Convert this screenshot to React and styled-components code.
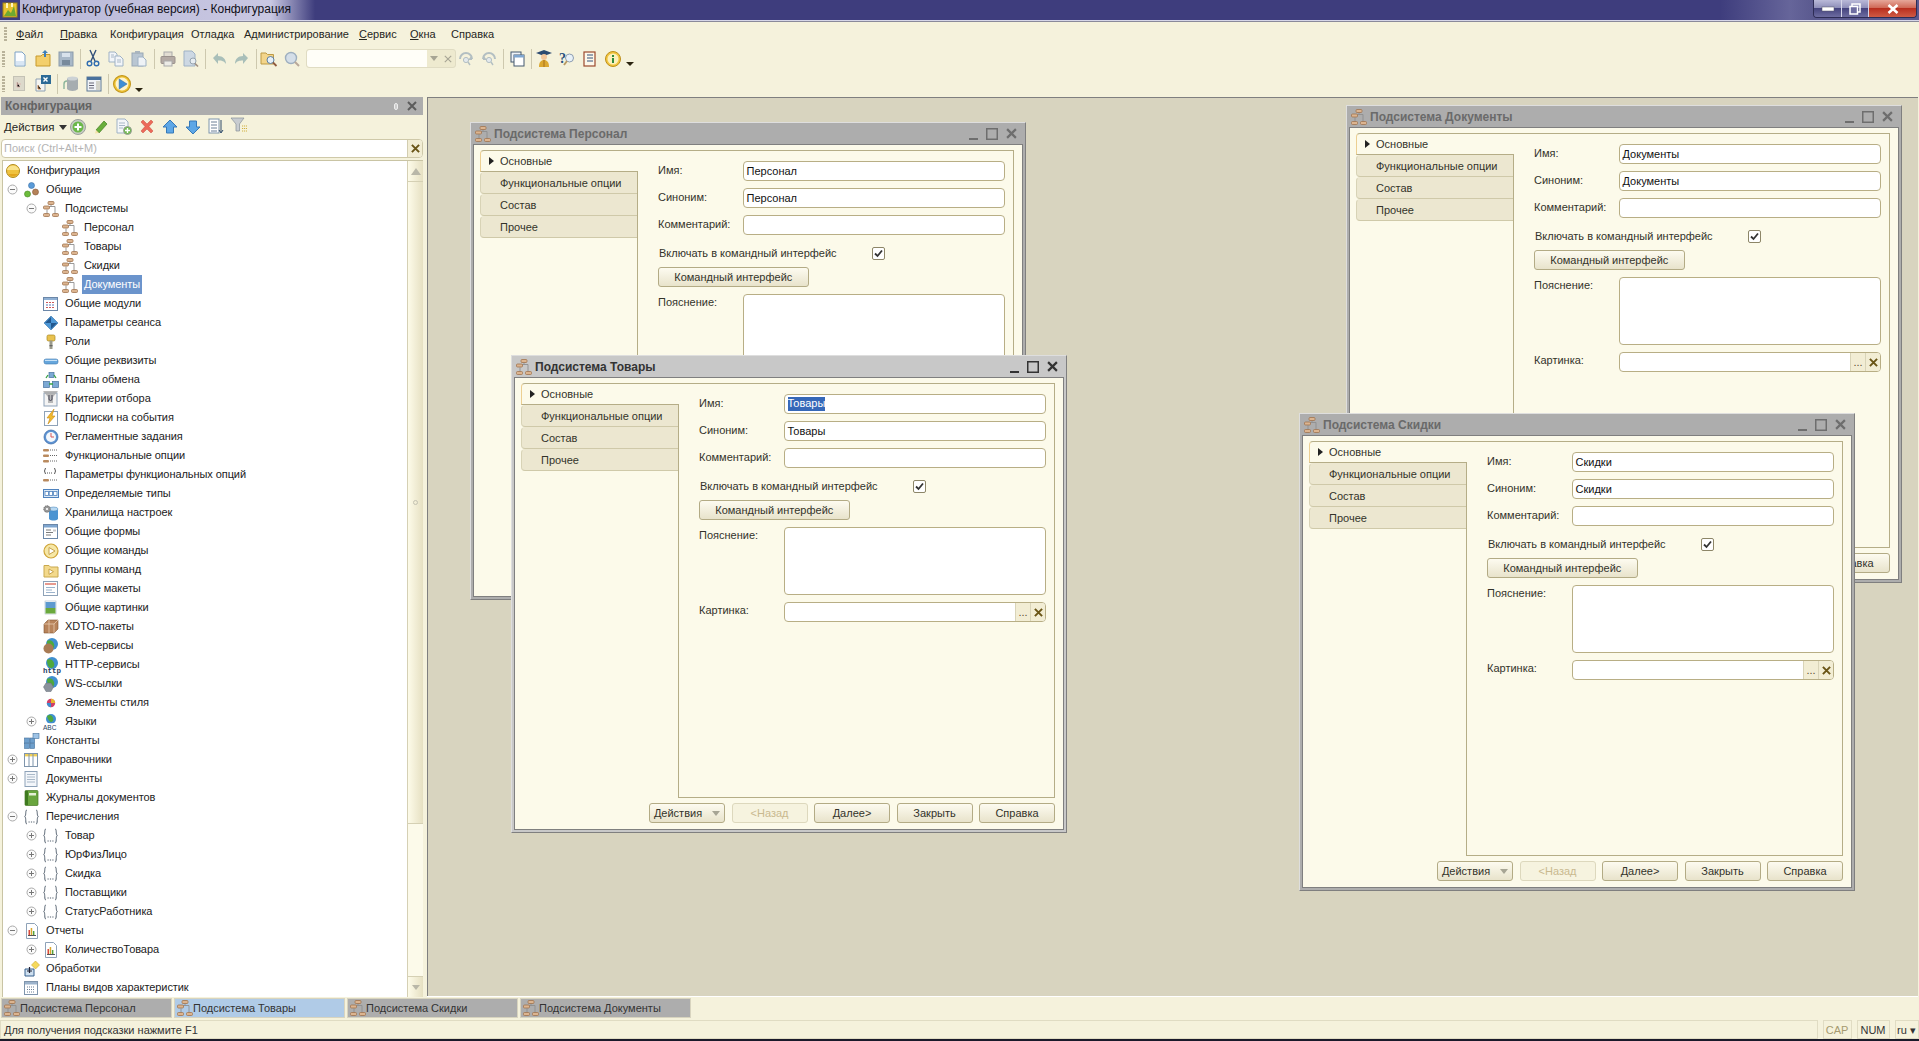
import React from "react";
import styled, { createGlobalStyle } from "styled-components";

const Global = createGlobalStyle`
  html, body { margin: 0; padding: 0; width: 1919px; height: 1041px; overflow: hidden; background: #f5f2dc; }
  body { font: 11px "Liberation Sans", Arial, sans-serif; color: #1c1c1c; }
  * { box-sizing: border-box; }
`;

const Svg = styled.svg`
  display: block;
  flex: none;
  overflow: visible;
`;

const G = ({ s = 16, children }) => (
  <Svg width={s} height={s} viewBox="0 0 16 16">{children}</Svg>
);

const Globe = () => (
  <>
    <circle cx="9" cy="6" r="6" fill="#3f8fd0" />
    <path d="M4 3c3-2 6 0 7 3s-1 5-3 5-4-3-4-8z" fill="#4fa83d" />
  </>
);

const ICONS = {
  app: (<><rect x="1" y="1" width="14" height="14" fill="#e8c230" stroke="#a08418" /><path d="M2 14l4-6 3 3 3-7 2 10z" fill="#6fa830" /><path d="M4 1v5h2V1zM9 1v4h2V1z" fill="#fff6c0" /></>),
  sub: (<><g stroke="#8f8f8f" fill="none" strokeWidth=".9"><path d="M8 3.500v2M4 8.500V12.500M4 5.500h8M12 5.500V12.500" /></g><g fill="#dcb48f" stroke="#a0744f" strokeWidth=".8"><rect x="5" y=".5" width="6" height="3" rx="1" /><rect x=".5" y="5" width="6" height="3" rx="1" /><rect x=".5" y="12.500" width="6" height="3" rx="1" /><rect x="9.500" y="12.500" width="6" height="3" rx="1" /></g></>),
  config: (<><circle cx="8" cy="8" r="6.500" fill="#efc23e" stroke="#b18b1e" /><path d="M2 7c1-6 11-6 12 0z" fill="#f9e38c" /><path d="M3 11c3 3 7 3 10 0z" fill="#e2a51d" /></>),
  common: (<><circle cx="7.500" cy="3.500" r="3" fill="#5a9bd8" stroke="#3d72a8" strokeWidth=".6" /><circle cx="3.500" cy="12" r="3" fill="#6cbc3c" stroke="#478a22" strokeWidth=".6" /><circle cx="11.500" cy="10" r="3" fill="#b58258" stroke="#84593a" strokeWidth=".6" /></>),
  module: (<><rect x=".5" y="1.500" width="14" height="13" fill="#fff" stroke="#6b87a8" /><rect x="1" y="2" width="13" height="2" fill="#8fb0d4" /><path d="M3 6.500h9M3 11.500h9" stroke="#cc5a5a" strokeDasharray="2 1" /><path d="M3 9h9" stroke="#5a78b8" strokeDasharray="2 1" /></>),
  session: (<><path d="M8 1l7 7-7 7-7-7z" fill="#4c97d6" stroke="#2f6ea8" strokeWidth=".6" /><path d="M8 8h6l-6 6zM2 8h6V2z" fill="#23588e" /></>),
  role: (<><rect x="4" y="1" width="8" height="6" rx="1.500" fill="#e9c24f" stroke="#a9871f" strokeWidth=".7" /><rect x="6.500" y="6.500" width="3" height="8.500" fill="#9b9b8c" /><rect x="6.500" y="11" width="3" height="1.300" fill="#666" /></>),
  attr: (<><rect x="1" y="6" width="14" height="5" rx="2" fill="#66a6dc" stroke="#3b76ad" strokeWidth=".6" /><rect x="2" y="6.800" width="12" height="1.200" fill="#c7e2f7" /></>),
  exchange: (<><g fill="#7ca9d4" stroke="#47719d" strokeWidth=".7"><rect x="6" y=".5" width="5" height="5" /><rect x=".5" y="9.500" width="6" height="6" /><rect x="9.500" y="9.500" width="6" height="6" /></g><path d="M3 6l2-3M13 6l-2-3M6 12h4" stroke="#37a244" strokeWidth="1.300" fill="none" /></>),
  filter: (<><rect x="1" y="2" width="13" height="13" fill="#f4f4f4" stroke="#8ea2b8" /><path d="M0 0h15l-5 6v6H5V6z" fill="#a8a8a8" opacity=".8" /><path d="M6 4v4a1.500 1.500 0 003 0V4" stroke="#445" fill="none" /></>),
  event: (<><rect x="1.500" y="1.500" width="13" height="14" fill="#fff" stroke="#8ea2b8" /><path d="M11-1L4 8h3l-2 6 7-8H9z" fill="#f0b92e" stroke="#c98a16" strokeWidth=".6" /></>),
  clock: (<><circle cx="8" cy="8" r="7" fill="#5d93d2" stroke="#3a69a6" strokeWidth=".7" /><circle cx="8" cy="8" r="5" fill="#f4f8fc" /><path d="M8 4v4h3" stroke="#d85757" strokeWidth="1" fill="none" /></>),
  options: (<><g fill="#b98a5e"><rect x="0" y="1" width="6" height="2.400" rx="1" /><rect x="0" y="6.500" width="6" height="2.400" rx="1" /><rect x="0" y="12" width="6" height="2.400" rx="1" /></g><path d="M7 2h8M7 7.500h8M7 13h8" stroke="#666" strokeDasharray="1 1" /></>),
  optparams: (<><path d="M2.500 1Q.5 4 2.500 7M11.500 1q2 3 0 6" stroke="#555" fill="none" /><path d="M4 6h6" stroke="#555" strokeDasharray="1 1" /><rect x="0" y="12" width="6" height="2.400" rx="1" fill="#b98a5e" /><path d="M7 13h8" stroke="#666" strokeDasharray="1 1" /></>),
  types: (<><rect x=".5" y="3.500" width="15" height="8" fill="#dbe9f7" stroke="#4f82bd" /><g fill="#fff" stroke="#4f82bd" strokeWidth=".8"><rect x="2" y="5.500" width="3.400" height="4" /><rect x="6.200" y="5.500" width="3.400" height="4" /><rect x="10.600" y="5.500" width="3.400" height="4" /></g></>),
  storage: (<><path d="M6 4h9v10c-2 2-7 2-9 0z" fill="#4c94d2" /><ellipse cx="10.500" cy="4" rx="4.500" ry="2" fill="#b7d8f2" stroke="#3d7cb4" strokeWidth=".5" /><circle cx="4" cy="4" r="3.200" fill="#9a9a9a" stroke="#6b6b6b" strokeDasharray="1.400 .7" /><circle cx="4" cy="4" r="1.100" fill="#fff" /></>),
  forms: (<><rect x=".5" y=".5" width="14" height="14" fill="#fff" stroke="#6b87a8" /><rect x="1" y="1" width="13" height="2.500" fill="#7fa6d0" /><path d="M3 6h5M3 8.500h7M3 11h5" stroke="#7b7b7b" /><rect x="10" y="5.500" width="3" height="2" fill="#c9c9c9" /></>),
  commands: (<><circle cx="8" cy="8" r="7" fill="#f6e7a6" stroke="#cfa437" strokeWidth="1.200" /><path d="M6 4.500l6 3.500-6 3.500z" fill="#fff" stroke="#c7a24b" /></>),
  cmdgroup: (<><path d="M1 3.500h5l1.500 1.500h7.500v10H1z" fill="#f3d98c" stroke="#c9a94e" /><path d="M6 7l4.500 2.700L6 12.400z" fill="#fff" stroke="#c7a24b" /></>),
  template: (<><rect x=".5" y=".5" width="14" height="14" fill="#fff" stroke="#8ea2b8" /><rect x="2" y="2" width="11" height="2" fill="#e89a8f" /><path d="M3 6.500h9M3 9h6M3 11.500h9" stroke="#9cb3cc" /></>),
  picture: (<><rect x="2" y="1" width="11" height="13" fill="#fff" stroke="#9ab" strokeWidth=".5" /><rect x="2.500" y="2" width="10" height="6" fill="#5d9ad0" /><rect x="2.500" y="8" width="10" height="5.500" fill="#6aa93d" /></>),
  xdto: (<><path d="M1 5l4-4h10v9l-4 4H1z" fill="#b8845b" stroke="#7f5534" strokeWidth=".6" /><path d="M1 5h10v9M11 5l4-4M6 1v13" stroke="#e8cbb0" fill="none" strokeWidth=".8" /></>),
  web: (<><Globe /><circle cx="5.500" cy="10.500" r="5" fill="#a87b55" /></>),
  http: (<><Globe /><text x="0" y="15.500" fontSize="7.500" fontWeight="700" fontFamily="Liberation Mono" fill="#25405e">http</text></>),
  ws: (<><Globe /><path d="M3 7h5l2.500 4-2.500 4.500H3L.5 11z" fill="#8a929c" stroke="#656c74" strokeWidth=".5" /></>),
  style: (<><circle cx="8" cy="8" r="4.200" fill="#cf3f6a" /><path d="M8 3.800a4.200 4.200 0 014.200 4.200H8z" fill="#e9b62d" /><path d="M8 12.200A4.200 4.200 0 013.800 8H8z" fill="#3c8fd0" /></>),
  lang: (<><circle cx="8" cy="5" r="5" fill="#3f8fd0" /><path d="M4 2c3-2 5-1 6 2s-1 4-2 4-3-2-4-6z" fill="#4fa83d" /><rect x="0" y="9" width="16" height="7" fill="#fff" opacity=".7" /><text x="0" y="15.500" fontSize="6.500" fontFamily="Liberation Sans" fill="#25405e">ABC</text></>),
  constant: (<><g fill="#6e9fcc" stroke="#45729d" strokeWidth=".6"><rect x=".5" y="5" width="5" height="5" /><rect x="6" y="5" width="4.600" height="5" /><rect x=".5" y="10.500" width="5" height="5" /><rect x="6" y="10.500" width="4.600" height="5" /></g><rect x="9" y=".5" width="6" height="5" fill="#9ec3e6" stroke="#45729d" strokeWidth=".6" /></>),
  catalog: (<><rect x=".5" y="1.500" width="13" height="13" fill="#fff" stroke="#7f95ac" /><rect x="1" y="2" width="12" height="2.400" fill="#f0cf58" /><path d="M5 2v12M9 2v12" stroke="#7f95ac" /></>),
  doc: (<><rect x="1" y=".5" width="12" height="15" fill="#f3f6fa" stroke="#8ea2b8" /><path d="M3 3.500h8M3 6h8M3 8.500h8M3 11h8" stroke="#a9b8c8" /></>),
  journal: (<><rect x="1" y=".5" width="13" height="15" rx="1" fill="#69a53e" stroke="#477a25" strokeWidth=".7" /><rect x="1" y="1" width="3" height="14" fill="#3f7a20" /><rect x="5" y="3" width="7" height="2.500" fill="#e4f0d6" /></>),
  enumI: (<><path d="M3 1C1 1 2.500 6 .8 7.500 2.500 9 1 15 3 15M12 1c2 0 .5 5 2.200 6.500C12.500 9 14 15 12 15" stroke="#53606e" fill="none" /><path d="M4.500 13h6" stroke="#53606e" strokeWidth="1.200" strokeDasharray="1.200 1.200" /></>),
  report: (<><path d="M2.500.5h8l3 3v12h-11z" fill="#fff" stroke="#8ea2b8" /><rect x="4.500" y="7" width="1.500" height="5" fill="#d84b3b" /><rect x="6.700" y="5" width="1.500" height="7" fill="#d9a72c" /><rect x="8.900" y="8" width="1.500" height="4" fill="#55a23d" /><path d="M4 12.500h8" stroke="#555" /></>),
  proc: (<><path d="M1 8h9v7H1z" fill="#cfe0f0" stroke="#36608e" /><path d="M5.500 6v6M3 10h5" stroke="#223" strokeWidth="1.200" /><path d="M11.500 0l4 4-4 4-4-4z" fill="#f6da5c" stroke="#c9a52b" strokeWidth=".6" /></>),
  plan: (<><rect x=".5" y="1.500" width="13" height="13" fill="#fff" stroke="#7f95ac" /><rect x="1" y="2" width="12" height="2.500" fill="#9cb3cc" /><path d="M3 7h8M3 9.500h8M3 12h8" stroke="#6a7f96" strokeDasharray="1 1" /></>),

  newDoc: (<><path d="M3 1h7l3 3v11H3z" fill="#fbfdff" stroke="#7da2c6" /><path d="M4 10h8v4H4z" fill="#d8e6f4" /></>),
  open: (<><path d="M1 5h5l1.500-1.500H15V15H1z" fill="#f3cf6c" stroke="#c79a2c" /><path d="M10-1l3 3h-2v4H9V2H7z" fill="#3f7fb8" /></>),
  save: (<><rect x="1" y="1" width="14" height="14" fill="#a8b8c8" stroke="#8b9bab" /><rect x="4" y="2" width="8" height="4" fill="#d8e2ec" /><rect x="4" y="9" width="8" height="5" fill="#788a9c" /></>),
  cut: (<><path d="M5-1l5 11M11-1L6 10" stroke="#32507a" strokeWidth="1.400" /><circle cx="4.500" cy="12.500" r="2.300" fill="none" stroke="#2f6cb0" strokeWidth="1.400" /><circle cx="11.500" cy="12.500" r="2.300" fill="none" stroke="#2f6cb0" strokeWidth="1.400" /></>),
  copy: (<><g fill="#f2f5f9" stroke="#9fb2c5"><path d="M1 1h6l2 2v8H1z" /><path d="M7 5h5l3 3v7H7z" /></g><path d="M9 9h4M9 11h4M3 4h3M3 6h3" stroke="#a9b8c8" /></>),
  paste: (<><rect x="1" y="2" width="11" height="13" fill="#b9c6d2" stroke="#9aa8b5" /><rect x="4" y="0" width="5" height="3" fill="#a9b5bf" /><path d="M7 6h5l3 3v6H7z" fill="#eef2f6" stroke="#9fb2c5" /></>),
  print: (<><rect x="4" y="1" width="8" height="5" fill="#e2ddd2" stroke="#aaa" /><rect x="1" y="5.500" width="14" height="7" rx="1" fill="#b4aaa4" stroke="#9a918c" /><rect x="4" y="10" width="8" height="5" fill="#ecebe6" stroke="#aaa" /></>),
  preview: (<><path d="M1 0h8l3 3v12H1z" fill="#cdd8e3" stroke="#9fb2c5" /><circle cx="10" cy="10" r="3" fill="#e7edf2" stroke="#96a3ae" /><path d="M12 12.500l3 3" stroke="#a08e80" strokeWidth="1.600" /></>),
  undo: (<path d="M1 7l5-5v3c5 0 8 3 8 8-2-3-4-3.500-8-3.500V13z" fill="#a9bfb9" />),
  redo: (<path d="M15 7l-5-5v3C5 5 2 8 2 13c2-3 4-3.500 8-3.500V13z" fill="#a9bfb9" />),
  find: (<><path d="M0 2h5l1.500 1.500h6V13H0z" fill="#f3d58a" stroke="#bd9a45" /><circle cx="9.500" cy="9" r="3.500" fill="#e6f0f8" stroke="#5d7fa0" /><path d="M12 11.500l3.500 3.500" stroke="#8f5b3e" strokeWidth="1.800" /></>),
  mag: (<><circle cx="7" cy="7" r="5.500" fill="#d4dee8" stroke="#9eafbf" strokeWidth="1.400" /><path d="M11 11l4 4" stroke="#b9a99a" strokeWidth="2" /></>),
  nextF: (<><path d="M2 8a6 6 0 0112 0" fill="none" stroke="#b3bfc2" strokeWidth="2" /><path d="M14 4v5h-4z" fill="#b3bfc2" /><circle cx="8" cy="9" r="2.600" fill="#e3e9ed" stroke="#b3bfc2" /><path d="M10 11l2 3" stroke="#b3bfc2" strokeWidth="1.400" /></>),
  prevF: (<><path d="M2 8a6 6 0 0112 0" fill="none" stroke="#b3bfc2" strokeWidth="2" /><path d="M2 4v5h4z" fill="#b3bfc2" /><circle cx="8" cy="9" r="2.600" fill="#e3e9ed" stroke="#b3bfc2" /><path d="M10 11l2 3" stroke="#b3bfc2" strokeWidth="1.400" /></>),
  windows: (<><rect x="1" y="1" width="10" height="10" fill="#eef3f8" stroke="#44596f" /><rect x="4" y="4" width="10" height="11" fill="#fff" stroke="#44596f" /><rect x="4" y="4" width="10" height="2.500" fill="#7fa6d0" /></>),
  student: (<><path d="M8-1l8 3-8 3-8-3z" fill="#2c4a70" /><circle cx="8" cy="6" r="3" fill="#f3c69a" /><path d="M3 16c0-5 2-7 5-7s5 2 5 7z" fill="#dba830" /><path d="M8 9v7" stroke="#a86f18" /></>),
  help: (<><text x="0" y="12" fontSize="14" fontWeight="700" fontFamily="Liberation Serif" fill="#27507e">?</text><circle cx="10.500" cy="7" r="4" fill="#e8f1f8" stroke="#8d9db0" /><path d="M8 10l-3 4" stroke="#b89a62" strokeWidth="1.800" /></>),
  book: (<><rect x="2" y="1" width="11" height="14" fill="#fdf8ea" stroke="#9c4a2d" strokeWidth="1.200" /><path d="M5 4h6M5 7h6M5 10h6" stroke="#33517a" /></>),
  info: (<><circle cx="8" cy="8" r="7.500" fill="#f2c53e" stroke="#bd8f1b" /><circle cx="8" cy="8" r="5.500" fill="#fbf0bd" /><rect x="7" y="7" width="2" height="5" fill="#2f8a3c" /><rect x="7" y="4" width="2" height="2" fill="#2f8a3c" /></>),
  treeOff: (<><rect x="1.500" y=".5" width="11" height="14" fill="#dcd9cb" stroke="#c4c2b5" /><path d="M5 6v5h3M5 8h4" stroke="#dcb8b0" /></>),
  xlsx: (<><path d="M1 3h9v12H1z" fill="#f6f6f2" stroke="#8da0b2" /><rect x="6" y="-1" width="10" height="9" fill="#2c6a96" /><path d="M8.500 1.500l4 4M12.500 1.500l-4 4" stroke="#fff" strokeWidth="1.400" /><path d="M3 9v4h3" stroke="#c98a52" /></>),
  db: (<><path d="M4 2h11v11c-2 2.500-9 2.500-11 0z" fill="#a6adb0" /><ellipse cx="9.500" cy="2.500" rx="5.500" ry="2" fill="#ccd2d5" /><path d="M1 8a3 3 0 013-3M1 8v5" stroke="#8bb59a" strokeWidth="1.400" fill="none" /></>),
  form: (<><rect x="1" y="1" width="14" height="14" fill="#f0f3f6" stroke="#5e7894" /><rect x="1" y="1" width="14" height="3" fill="#49719d" /><path d="M3 7h5M3 9.500h5M3 12h5" stroke="#667" /><rect x="10" y="5" width="4" height="9" fill="#d3d3c9" /></>),
  play: (<><circle cx="8" cy="8" r="7.500" fill="#f0c536" stroke="#c2961c" /><circle cx="8" cy="8" r="5.700" fill="#fdf4cf" /><path d="M5.500 3.500l7 4.500-7 4.500z" fill="#3e8ed6" stroke="#2a6aa8" strokeWidth=".5" /></>),
  plus: (<><circle cx="8" cy="8" r="7.500" fill="#c7ccc4" stroke="#9ba09a" /><circle cx="8" cy="8" r="5.500" fill="#6cb84a" /><path d="M8 4.500v7M4.500 8h7" stroke="#fff" strokeWidth="2" /></>),
  pencil: (<><path d="M3 11L11 2l3 3-8 9z" fill="#69ae3b" stroke="#3f7c1f" strokeWidth=".7" /><path d="M3 11l-1 3.500L6 14z" fill="#f3e2a8" /></>),
  copyNew: (<><path d="M1 0h8l3 3v11H1z" fill="#f4f6f8" stroke="#9fb2c5" /><path d="M3 4h6M3 6.500h6M3 9h4" stroke="#a9b8c8" /><circle cx="11.500" cy="11.500" r="4" fill="#6cb84a" stroke="#9ba09a" /><path d="M11.500 9v5M9 11.500h5" stroke="#fff" strokeWidth="1.400" /></>),
  del: (<path d="M2 3l2-2 4 4 4-4 2 2-4 4.500 4 4.500-2 2-4-4-4 4-2-2 4-4.500z" fill="#ec6a5a" stroke="#c84a3d" strokeWidth=".5" />),
  up: (<path d="M8 1l7 7h-3.500v6h-7V8H1z" fill="#5ea7e6" stroke="#3679b8" />),
  down: (<path d="M8 15l7-7h-3.500V2h-7v6H1z" fill="#5ea7e6" stroke="#3679b8" />),
  sortL: (<><rect x="1" y="0" width="10" height="14" fill="#fff" stroke="#7f95ac" /><path d="M3 3h6M3 6h6M3 9h6M3 12h6" stroke="#6a7f96" /><path d="M13 1v12M11 11l2 3 2-3" stroke="#2e4a6a" fill="none" /></>),
  funnel: (<><path d="M0-1h13L8.500 5v7H5V5z" fill="#c8ccd0" stroke="#87909a" strokeWidth=".7" /><path d="M11 7h5M11 9.500h5M11 12h5" stroke="#d0b040" strokeDasharray="1.200 .8" /></>),
};

const Ico = ({ n, s }) => <G s={s}>{ICONS[n]}</G>;

const Root = styled.div`
  width: 1919px;
  height: 1041px;
  display: flex;
  flex-direction: column;
  background: #f5f2dc;
  overflow: hidden;
`;

/* caption of the main window */
const Caption = styled.header`
  height: 21px;
  flex: none;
  display: flex;
  align-items: flex-start;
  background: linear-gradient(90deg, #3e3d7d 0, #3e3d7d 1720px, #66659a 1790px, #5a598f 1814px);
  border-bottom: 1px solid #d6d6e8;
`;
const CaptionIcon = styled.div`
  padding: 2px 3px 0 2px;
`;
const CaptionText = styled.div`
  height: 20px;
  line-height: 19px;
  padding: 0 18px 0 2px;
  font-size: 12px;
  color: #101018;
  background: linear-gradient(90deg, #b9b8d8 0, #c9c8e2 85%, rgba(185, 184, 216, 0) 100%);
  width: 295px;
  white-space: nowrap;
  margin-left: -1px;
`;
const SysButtons = styled.div`
  margin-left: auto;
  margin-right: 2px;
  display: flex;
  height: 18px;
  border: 1px solid #2d2c55;
  border-top: 0;
  border-radius: 0 0 4px 4px;
  overflow: hidden;
`;
const SysButton = styled.div`
  width: ${(p) => p.$w}px;
  display: flex;
  align-items: center;
  justify-content: center;
  border-right: 1px solid #d7d7ea;
  background: ${(p) =>
    p.$close
      ? "linear-gradient(180deg,#e6a79a 0,#d06a58 45%,#b92f1f 50%,#cf5a44 100%)"
      : "linear-gradient(180deg,#b9b9d8 0,#8f8fba 45%,#45447f 50%,#6d6ca0 100%)"};
  &:last-child { border-right: 0; }
`;

/* menu and toolbars */
const MenuBar = styled.nav`
  height: 25px;
  flex: none;
  display: flex;
  align-items: center;
  padding: 0 0 1px 4px;
  border-top: 1px solid #8a8a9a;
`;
const Grip = styled.i`
  width: 3px;
  height: ${(p) => p.$h || 14}px;
  flex: none;
  background: repeating-linear-gradient(180deg, #b9b39a 0 2px, transparent 2px 3px);
`;
const MenuItem = styled.span`
  width: ${(p) => p.$w}px;
  flex: none;
  white-space: nowrap;
  color: #26261e;
  u { text-decoration: underline; }
`;
const MenuStart = styled.div`
  width: 9px;
  flex: none;
`;
const ToolRow = styled.div`
  height: ${(p) => p.$h}px;
  flex: none;
  display: flex;
  align-items: center;
  padding-left: 2px;
`;
const GripSlot = styled.div`
  width: 3.500px;
  flex: none;
`;
const Tool = styled.div`
  width: ${(p) => p.$w || 23}px;
  margin-left: ${(p) => p.$l || 0}px;
  flex: none;
  display: flex;
  justify-content: center;
`;
const Sep = styled.i`
  width: 1px;
  height: 20px;
  flex: none;
  background: #cdc8ae;
  margin: 0 ${(p) => p.$r}px 0 ${(p) => p.$l}px;
`;
const Caret = styled.i`
  width: 0;
  height: 0;
  flex: none;
  align-self: flex-end;
  margin: 0 0 5px ${(p) => p.$l}px;
  border: 4px solid transparent;
  border-top: 4px solid #2b2410;
  border-bottom: 0;
`;
const Combo = styled.div`
  width: 150px;
  height: 19px;
  margin-left: 2px;
  flex: none;
  display: flex;
  border: 1px solid #e0dcc3;
  border-radius: 3px;
  background: #eeeacf;
`;
const ComboField = styled.div`
  flex: 1;
  background: #fffef8;
  border-radius: 3px 0 0 3px;
`;
const ComboBtn = styled.div`
  width: 14px;
  flex: none;
  display: flex;
  align-items: center;
  justify-content: center;
  color: #a7a594;
  font-size: 11px;
`;
const SmallTri = styled.i`
  width: 0;
  height: 0;
  border: 4px solid transparent;
  border-top: 5px solid ${(p) => p.$c || "#a7a594"};
  border-bottom: 0;
`;

/* workspace */
const Workspace = styled.div`
  flex: 1;
  display: flex;
  min-height: 0;
`;
const Panel = styled.aside`
  width: 427px;
  flex: none;
  padding-right: 4px;
  display: flex;
  flex-direction: column;
`;
const PanelHead = styled.div`
  height: 18px;
  flex: none;
  margin-left: 1px;
  padding: 0 6px 0 4px;
  background: #adadad;
  display: flex;
  align-items: center;
  color: #636363;
  font-size: 12px;
  font-weight: 700;
`;
const PanelHeadBtns = styled.div`
  margin-left: auto;
  display: flex;
  align-items: center;
  gap: 9px;
`;
const Pin = styled.i`
  width: 4px;
  height: 7px;
  border: 1px solid #eee;
  border-radius: 2px;
  background: #ccc;
`;
const ActionsBar = styled.div`
  height: 24px;
  flex: none;
  display: flex;
  align-items: center;
`;
const ActionsLabel = styled.div`
  width: 66.500px;
  flex: none;
  display: flex;
  align-items: center;
  padding-left: 4px;
  gap: 5px;
  color: #26261e;
  font-size: 11.500px;
`;
const Search = styled.div`
  height: 19px;
  flex: none;
  margin: 0 0 2px 1px;
  display: flex;
  border: 1px solid #cfc9a9;
  border-radius: 4px;
  background: #fff;
  overflow: hidden;
  color: #b4b4b4;
  line-height: 17px;
  padding-left: 2px;
`;
const SearchText = styled.div`
  flex: 1;
`;
const ClearBtn = styled.div`
  width: 15px;
  flex: none;
  display: flex;
  align-items: center;
  justify-content: center;
  background: #f2edd4;
  border-left: 1px solid #d2cdb0;
`;
const TreeBox = styled.div`
  flex: 1;
  min-height: 0;
  margin-left: 2px;
  display: flex;
  background: #fff;
  border-top: 1px solid #c9c4a4;
  border-left: 1px solid #c9c4a4;
  overflow: hidden;
`;
const TreeList = styled.div`
  flex: 1;
  min-width: 0;
  overflow: hidden;
  margin-left: -3px;
`;
const Row = styled.div`
  height: 19px;
  display: flex;
  align-items: center;
  padding-left: ${(p) => (p.$lv === 0 ? 5 : (p.$lv - 1) * 19 + 3)}px;
`;
const Expander = styled.div`
  width: 21px;
  padding-left: 3.500px;
  flex: none;
`;
const RowLabel = styled.span`
  height: 19px;
  line-height: 18px;
  margin-left: 4px;
  padding: 0 2px;
  white-space: nowrap;
  letter-spacing: -0.07px;
  color: ${(p) => (p.$sel ? "#fff" : "#22221c")};
  background: ${(p) => (p.$sel ? "#6b94cc" : "transparent")};
`;
const Scroll = styled.div`
  width: 16px;
  flex: none;
  display: flex;
  flex-direction: column;
  border-left: 1px solid #d5d0b4;
  background: #fcfaea;
`;
const ScrollEnd = styled.div`
  height: 21px;
  flex: none;
  display: flex;
  align-items: center;
  justify-content: center;
  background: linear-gradient(90deg, #fdfbe9, #e6e0c2);
  border-bottom: 1px solid #d5d0b4;
  &:last-child { border-top: 1px solid #d5d0b4; border-bottom: 0; margin-top: auto; }
`;
const ScrollUpTri = styled.i`
  width: 0;
  height: 0;
  border: 5px solid transparent;
  border-bottom: 7px solid #b9b7a8;
  border-top: 0;
`;
const Thumb = styled.div`
  height: 642px;
  flex: none;
  display: flex;
  align-items: center;
  justify-content: center;
  background: linear-gradient(90deg, #fdfbe9, #e6e0c2);
  border-bottom: 1px solid #d5d0b4;
  color: #b8b6a6;
`;
const ThumbGrip = styled.i`
  width: 5px;
  height: 5px;
  border-radius: 50%;
  border: 1px solid #c4c2b2;
`;
const Desk = styled.main`
  flex: 1;
  position: relative;
  margin: 0 1px 1px 0;
  background: #d8d4bf;
  border-top: 1px solid #7f7f7f;
  border-left: 1px solid #7f7f7f;
  box-shadow: 0 1px 0 #fff;
`;

/* MDI windows */
const Win = styled.section`
  position: absolute;
  left: ${(p) => p.$x}px;
  top: ${(p) => p.$y}px;
  width: 556px;
  height: 478px;
  display: flex;
  flex-direction: column;
  border: 1px solid #7f7f7f;
  border-top-color: #dedede;
  border-left-color: #dedede;
  background: ${(p) => (p.$active ? "#c8c8c8" : "#adadad")};
`;
const WinTitle = styled.div`
  height: 21px;
  flex: none;
  display: flex;
  align-items: center;
  padding: 0 8px 0 4px;
  gap: 3px;
  font-size: 12px;
  font-weight: 700;
  color: ${(p) => (p.$active ? "#333" : "#6a6a6a")};
`;
const WinBtns = styled.div`
  margin-left: auto;
  display: flex;
  align-items: center;
  gap: 8px;
`;
const WinBody = styled.div`
  flex: 1;
  min-height: 0;
  margin: 0 2px 2px;
  border: 1px solid #7f7f7f;
  background: #fcfaea;
  padding: 5px 8px 6px 6px;
  display: flex;
  flex-direction: column;
`;
const Split = styled.div`
  flex: 1;
  min-height: 0;
  display: flex;
`;
const Tabs = styled.div`
  width: 157px;
  flex: none;
  display: flex;
  flex-direction: column;
  position: relative;
  z-index: 1;
`;
const TabItem = styled.div`
  height: 22px;
  display: flex;
  align-items: center;
  padding-left: 8px;
  color: #33332a;
  border-left: 1px solid ${(p) => (p.$on ? "#eccf92" : "#d8d3b6")};
  border-top: 1px solid ${(p) => (p.$on ? "#b5ad87" : "transparent")};
  border-bottom: 1px solid #cfc9a9;
  border-radius: 4px 0 0 4px;
  background: ${(p) => (p.$on ? "#fcfaea" : "#ece7d0")};
  margin-right: ${(p) => (p.$on ? -1 : 0)}px;
  ${(p) => p.$on && "border-bottom-color: #b5ad87; border-radius: 4px 0 0 0;"}
`;
const TabMark = styled.i`
  flex: none;
  height: 0;
  width: 6px;
  box-sizing: content-box;
  border-left: 5px solid ${(p) => (p.$on ? "#222" : "transparent")};
  border-top: 4.500px solid transparent;
  border-bottom: 4.500px solid transparent;
`;
const Pane = styled.div`
  flex: 1;
  min-width: 0;
  border: 1px solid #b5ad87;
  padding: 10px 8px 0 20px;
  display: flex;
  flex-direction: column;
`;
const Field = styled.div`
  display: grid;
  grid-template-columns: 84.500px 1fr;
  margin-bottom: 7px;
`;
const FieldLabel = styled.label`
  color: #33332a;
  line-height: ${(p) => (p.$low ? 19 : 17)}px;
`;
const Input = styled.div`
  height: ${(p) => p.$h || 20}px;
  display: flex;
  border: 1px solid #b8ae85;
  border-radius: 4px;
  background: #fff;
  color: #111;
  line-height: 18px;
  padding-left: 3px;
  overflow: hidden;
`;
const Sel = styled.span`
  background: #3668b8;
  color: #fff;
  height: 14px;
  line-height: 13px;
  margin-top: 2px;
`;
const InputBtn = styled.div`
  width: 15px;
  flex: none;
  display: flex;
  align-items: center;
  justify-content: center;
  background: #f2edd4;
  border-left: 1px solid #d9d4b8;
  color: #5a5030;
  margin-left: ${(p) => (p.$first ? "auto" : 0)};
  line-height: 1;
`;
const CheckRow = styled.div`
  height: 16px;
  margin: 3px 0 6px 1px;
  display: flex;
  align-items: center;
  color: #33332a;
`;
const CheckText = styled.span`
  width: 213px;
  flex: none;
  white-space: nowrap;
`;
const Check = styled.div`
  width: 13px;
  height: 13px;
  display: flex;
  align-items: center;
  justify-content: center;
  border: 1px solid #8d8668;
  border-radius: 2px;
  background: #fff;
`;
const Btn = styled.div`
  width: ${(p) => p.$w || 76}px;
  height: 20px;
  flex: none;
  display: flex;
  align-items: center;
  justify-content: center;
  gap: 10px;
  border: 1px solid ${(p) => (p.$off ? "#ddd8bd" : "#b3ab85")};
  border-radius: 3px;
  color: ${(p) => (p.$off ? "#c9b98f" : "#33332a")};
  background: ${(p) => (p.$off ? "#f6f3df" : "linear-gradient(180deg,#fdfbf0,#e8e3cb)")};
  margin-bottom: ${(p) => p.$mb || 0}px;
`;
const Footer = styled.div`
  height: 20px;
  flex: none;
  margin-top: 5px;
  display: flex;
  justify-content: flex-end;
  gap: 6.500px;
`;

/* bottom bars */
const TaskBar = styled.div`
  height: 23px;
  flex: none;
  padding: 1px 0 0 1px;
  display: flex;
  gap: 2px;
`;
const Task = styled.div`
  width: 171px;
  height: 20px;
  flex: none;
  display: flex;
  align-items: center;
  padding-left: 2px;
  white-space: nowrap;
  color: #333;
  background: ${(p) => (p.$on ? "#b0cbe7" : "#adadad")};
  border: 1px solid #d8d4bf;
`;
const Status = styled.footer`
  height: 21px;
  flex: none;
  display: flex;
  gap: 5px;
  border-bottom: 2px solid #1a1a2a;
  line-height: 18px;
`;
const Cell = styled.div`
  width: ${(p) => p.$w}px;
  flex: ${(p) => (p.$w ? "none" : 1)};
  border: 1px solid #e0dcc3;
  padding: 0 ${(p) => (p.$w ? 1 : 0)}px 0 ${(p) => (p.$w ? 0 : 3)}px;
  text-align: ${(p) => (p.$w ? "center" : "left")};
  color: ${(p) => (p.$off ? "#a59a70" : "#333")};
  white-space: nowrap;
`;

const TREE = [
  [0, "config", "Конфигурация"],
  [1, "common", "Общие", "-"],
  [2, "sub", "Подсистемы", "-"],
  [3, "sub", "Персонал"],
  [3, "sub", "Товары"],
  [3, "sub", "Скидки"],
  [3, "sub", "Документы", null, true],
  [2, "module", "Общие модули"],
  [2, "session", "Параметры сеанса"],
  [2, "role", "Роли"],
  [2, "attr", "Общие реквизиты"],
  [2, "exchange", "Планы обмена"],
  [2, "filter", "Критерии отбора"],
  [2, "event", "Подписки на события"],
  [2, "clock", "Регламентные задания"],
  [2, "options", "Функциональные опции"],
  [2, "optparams", "Параметры функциональных опций"],
  [2, "types", "Определяемые типы"],
  [2, "storage", "Хранилища настроек"],
  [2, "forms", "Общие формы"],
  [2, "commands", "Общие команды"],
  [2, "cmdgroup", "Группы команд"],
  [2, "template", "Общие макеты"],
  [2, "picture", "Общие картинки"],
  [2, "xdto", "XDTO-пакеты"],
  [2, "web", "Web-сервисы"],
  [2, "http", "HTTP-сервисы"],
  [2, "ws", "WS-ссылки"],
  [2, "style", "Элементы стиля"],
  [2, "lang", "Языки", "+"],
  [1, "constant", "Константы"],
  [1, "catalog", "Справочники", "+"],
  [1, "doc", "Документы", "+"],
  [1, "journal", "Журналы документов"],
  [1, "enumI", "Перечисления", "-"],
  [2, "enumI", "Товар", "+"],
  [2, "enumI", "ЮрФизЛицо", "+"],
  [2, "enumI", "Скидка", "+"],
  [2, "enumI", "Поставщики", "+"],
  [2, "enumI", "СтатусРаботника", "+"],
  [1, "report", "Отчеты", "-"],
  [2, "report", "КоличествоТовара", "+"],
  [1, "proc", "Обработки"],
  [1, "plan", "Планы видов характеристик"],
];

const MENU = [
  ["Ф", "айл", 44], ["П", "равка", 50], ["", "Конфигурация", 81], ["", "Отладка", 53],
  ["", "Администрирование", 115], ["С", "ервис", 51], ["О", "кна", 41], ["", "Справка", 50],
];

const ExpanderIcon = ({ k }) => (
  <Svg width="11" height="11" viewBox="0 0 11 11">
    <circle cx="5.500" cy="5.500" r="4.500" fill="#fbfbfb" stroke="#aaa" />
    <path d={k === "+" ? "M3 5.500h5M5.500 3v5" : "M3 5.500h5"} stroke="#777" />
  </Svg>
);

const Cross = ({ c = "#6b6b6b", s = 10, w = 2 }) => (
  <Svg width={s} height={s} viewBox="0 0 10 10">
    <path d="M1 1l8 8M9 1l-8 8" stroke={c} strokeWidth={w} />
  </Svg>
);
const CrossChunky = () => <Cross c="#6a5516" s={9} w={2.200} />;

const WinControls = ({ c }) => (
  <WinBtns>
    <Svg width="9" height="13" viewBox="0 0 9 13"><path d="M0 12h9" stroke={c} strokeWidth="2" /></Svg>
    <Svg width="12" height="12" viewBox="0 0 12 12"><rect x=".75" y=".75" width="10.500" height="10.500" fill="none" stroke={c} strokeWidth="1.500" /></Svg>
    <Cross c={c} s={11} />
  </WinBtns>
);

const SubsystemWindow = ({ x, y, name, active, selected }) => (
  <Win $x={x} $y={y} $active={active}>
    <WinTitle $active={active}>
      <Ico n="sub" />
      <span>Подсистема {name}</span>
      <WinControls c={active ? "#333" : "#6e6e6e"} />
    </WinTitle>
    <WinBody>
      <Split>
        <Tabs>
          {["Основные", "Функциональные опции", "Состав", "Прочее"].map((t, i) => (
            <TabItem key={t} $on={i === 0}>
              <TabMark $on={i === 0} />
              {t}
            </TabItem>
          ))}
        </Tabs>
        <Pane>
          <Field>
            <FieldLabel $low>Имя:</FieldLabel>
            <Input>{selected ? <Sel>{name}</Sel> : name}</Input>
          </Field>
          <Field>
            <FieldLabel $low>Синоним:</FieldLabel>
            <Input>{name}</Input>
          </Field>
          <Field>
            <FieldLabel $low>Комментарий:</FieldLabel>
            <Input />
          </Field>
          <CheckRow>
            <CheckText>Включать в командный интерфейс</CheckText>
            <Check>
              <Svg width="9" height="9" viewBox="0 0 9 9"><path d="M1 4.500l2.500 2.500L8 1.500" fill="none" stroke="#333" strokeWidth="1.800" /></Svg>
            </Check>
          </CheckRow>
          <Btn $w={150.500} $mb={7}>Командный интерфейс</Btn>
          <Field>
            <FieldLabel>Пояснение:</FieldLabel>
            <Input $h={68} />
          </Field>
          <Field>
            <FieldLabel>Картинка:</FieldLabel>
            <Input>
              <InputBtn $first>...</InputBtn>
              <InputBtn><CrossChunky /></InputBtn>
            </Input>
          </Field>
        </Pane>
      </Split>
      <Footer>
        <Btn>Действия <SmallTri /></Btn>
        <Btn $off>&lt;Назад</Btn>
        <Btn>Далее&gt;</Btn>
        <Btn>Закрыть</Btn>
        <Btn>Справка</Btn>
      </Footer>
    </WinBody>
  </Win>
);

export default function App() {
  return (
    <Root>
      <Global />
      <Caption>
        <CaptionIcon><Ico n="app" /></CaptionIcon>
        <CaptionText>Конфигуратор (учебная версия) - Конфигурация</CaptionText>
        <SysButtons>
          <SysButton $w={28}>
            <Svg width="12" height="6" viewBox="0 0 12 6"><rect x="0" y="1" width="12" height="4" fill="#fff" stroke="#556" strokeWidth=".5" /></Svg>
          </SysButton>
          <SysButton $w={27}>
            <Svg width="12" height="12" viewBox="0 0 12 12"><rect x="3" y="1" width="8" height="8" fill="none" stroke="#fff" strokeWidth="1.500" /><rect x="1" y="3.500" width="7.500" height="7.500" fill="#6d6ca0" stroke="#fff" strokeWidth="1.500" /></Svg>
          </SysButton>
          <SysButton $w={47} $close>
            <Svg width="12" height="10" viewBox="0 0 12 10"><path d="M1.500 1l9 8M10.500 1l-9 8" stroke="#fff" strokeWidth="2.600" /></Svg>
          </SysButton>
        </SysButtons>
      </Caption>

      <MenuBar>
        <Grip $h={14} />
        <MenuStart />
        {MENU.map(([a, b, w]) => (
          <MenuItem key={b} $w={w}>{a && <u>{a}</u>}{b}</MenuItem>
        ))}
      </MenuBar>

      <ToolRow $h={25}>
        <Grip $h={16} />
        <GripSlot />
        <Tool><Ico n="newDoc" /></Tool>
        <Tool><Ico n="open" /></Tool>
        <Tool><Ico n="save" /></Tool>
        <Sep $l={2} $r={1} />
        <Tool><Ico n="cut" /></Tool>
        <Tool><Ico n="copy" /></Tool>
        <Tool><Ico n="paste" /></Tool>
        <Sep $l={3} $r={2} />
        <Tool><Ico n="print" /></Tool>
        <Tool><Ico n="preview" /></Tool>
        <Sep $l={2} $r={3} />
        <Tool $w={22}><Ico n="undo" /></Tool>
        <Tool $w={21}><Ico n="redo" /></Tool>
        <Sep $l={4} $r={1} />
        <Tool><Ico n="find" /></Tool>
        <Tool><Ico n="mag" /></Tool>
        <Combo>
          <ComboField />
          <ComboBtn><SmallTri /></ComboBtn>
          <ComboBtn><Cross c="#a7a594" s={8} w={1.400} /></ComboBtn>
        </Combo>
        <Tool $w={20}><Ico n="nextF" /></Tool>
        <Tool $l={1.500}><Ico n="prevF" /></Tool>
        <Sep $l={3} $r={2} />
        <Tool><Ico n="windows" /></Tool>
        <Sep $l={2} $r={0} />
        <Tool><Ico n="student" /></Tool>
        <Tool><Ico n="help" /></Tool>
        <Tool><Ico n="book" /></Tool>
        <Tool><Ico n="info" /></Tool>
        <Caret $l={2} />
      </ToolRow>

      <ToolRow $h={26}>
        <Grip $h={16} />
        <GripSlot />
        <Tool><Ico n="treeOff" /></Tool>
        <Tool><Ico n="xlsx" /></Tool>
        <Sep $l={2} $r={2} />
        <Tool><Ico n="db" /></Tool>
        <Tool><Ico n="form" /></Tool>
        <Sep $l={2} $r={1.500} />
        <Tool><Ico n="play" s={18} /></Tool>
        <Caret $l={2} />
      </ToolRow>

      <Workspace>
        <Panel>
          <PanelHead>
            Конфигурация
            <PanelHeadBtns>
              <Pin />
              <Cross c="#5c5c5c" s={10} />
            </PanelHeadBtns>
          </PanelHead>
          <ActionsBar>
            <ActionsLabel>Действия <SmallTri $c="#333" /></ActionsLabel>
            {["plus", "pencil", "copyNew", "del", "up", "down", "sortL", "funnel"].map((n) => (
              <Tool key={n}><Ico n={n} /></Tool>
            ))}
          </ActionsBar>
          <Search>
            <SearchText>Поиск (Ctrl+Alt+M)</SearchText>
            <ClearBtn><CrossChunky /></ClearBtn>
          </Search>
          <TreeBox>
            <TreeList>
              {TREE.map(([lv, ic, label, exp, sel]) => (
                <Row key={label + lv + ic} $lv={lv}>
                  {lv > 0 && <Expander>{exp && <ExpanderIcon k={exp} />}</Expander>}
                  <Ico n={ic} />
                  <RowLabel $sel={sel}>{label}</RowLabel>
                </Row>
              ))}
            </TreeList>
            <Scroll>
              <ScrollEnd><ScrollUpTri /></ScrollEnd>
              <Thumb><ThumbGrip /></Thumb>
              <ScrollEnd><SmallTri $c="#b9b7a8" /></ScrollEnd>
            </Scroll>
          </TreeBox>
        </Panel>
        <Desk>
          <SubsystemWindow x={42} y={24} name="Персонал" />
          <SubsystemWindow x={918} y={7} name="Документы" />
          <SubsystemWindow x={83} y={257} name="Товары" active selected />
          <SubsystemWindow x={871} y={315} name="Скидки" />
        </Desk>
      </Workspace>

      <TaskBar>
        <Task><Ico n="sub" />Подсистема Персонал</Task>
        <Task $on><Ico n="sub" />Подсистема Товары</Task>
        <Task><Ico n="sub" />Подсистема Скидки</Task>
        <Task><Ico n="sub" />Подсистема Документы</Task>
      </TaskBar>
      <Status>
        <Cell>Для получения подсказки нажмите F1</Cell>
        <Cell $w={29} $off>CAP</Cell>
        <Cell $w={33}>NUM</Cell>
        <Cell $w={24}>ru ▾</Cell>
      </Status>
    </Root>
  );
}
